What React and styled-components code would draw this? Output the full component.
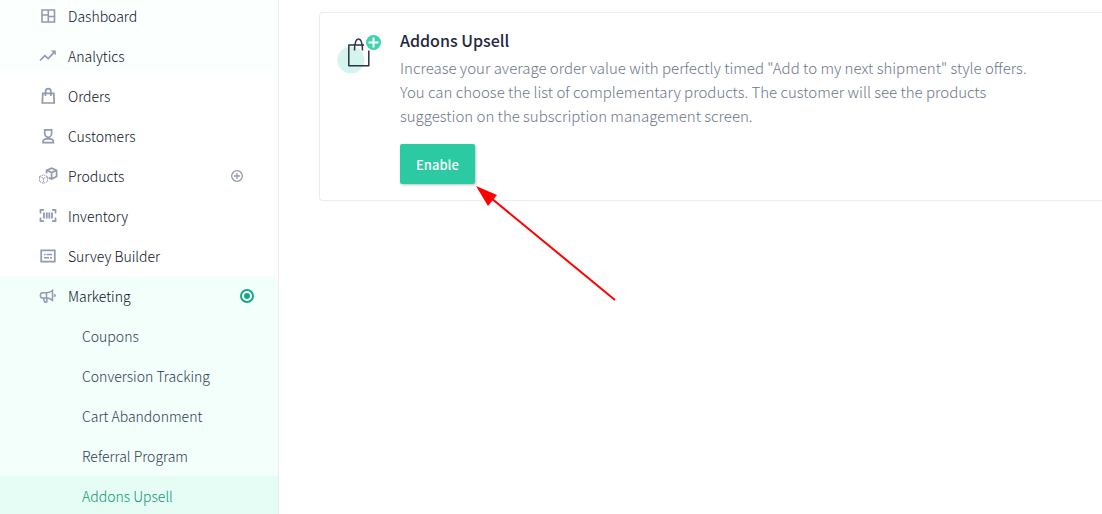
import React from 'react'
import styled, { createGlobalStyle } from 'styled-components';

const GlobalStyle = createGlobalStyle`
  * {
    box-sizing: border-box;
  }

  body {
    margin: 0;
    background: #fff;
    color: #0a1124;
    font-family: 'Noto Sans CJK SC', sans-serif;
    font-size: 14px;
  }
`

const Page = styled.div`
  display: flex;
  height: 100vh;
  overflow: hidden;
`

const Sidebar = styled.nav`
  flex: none;
  width: 279px;
  border-right: 1px solid #ececec;
  font-weight: 300;
`

/* the menu is scrolled down by a few pixels */
const Menu = styled.ul`
  margin: -4px 0 0;
  padding: 0;
  list-style: none;
`

const SubMenu = styled.ul`
  margin: 0;
  padding: 0;
  list-style: none;
`

const MenuItem = styled.li`
  background: ${({ $tone }) => ($tone === 'open' ? '#f2fffb' : $tone === 'hover' ? '#fbfffe' : 'transparent')};
`

const MenuRow = styled.div`
  display: flex;
  align-items: center;
  height: 40px;
  padding-right: ${({ $wide }) => ($wide ? '35px' : '24px')};
`

const MenuLink = styled.a`
  display: flex;
  flex: 1;
  align-items: center;
  gap: 10px;
  padding-left: 38px;
  line-height: 40px;
  color: #0a1124;
  text-decoration: none;
`

const SubLink = styled.a`
  display: block;
  padding-left: 82px;
  line-height: 40px;
  text-decoration: none;
  color: ${({ $active }) => ($active ? '#0c9372' : '#303a52')};
  background: ${({ $active }) => ($active ? '#e5fdf5' : 'transparent')};
`

const MenuIcon = styled.svg`
  flex: none;
  width: 20px;
  height: 20px;
  fill: none;
  stroke: #9299b0;
  stroke-width: 1.7;
`

const AddButton = styled.button`
  display: flex;
  padding: 0;
  border: none;
  background: none;
  cursor: pointer;
`

const Main = styled.main`
  flex: 1;
  min-width: 0;
  padding: 12px 0 0 40px;
`

const Card = styled.section`
  display: flex;
  align-items: flex-start;
  gap: 16px;
  padding: 16px;
  border: 1px solid #ececec;
  border-right: none;
  border-radius: 4px 0 0 4px;
`

const CardIcon = styled.svg`
  flex: none;
  width: 48px;
  height: 48px;
`

const CardBody = styled.div`
  max-width: 640px;
`

const CardTitle = styled.h2`
  margin: 0;
  font-size: 16px;
  font-weight: 500;
  line-height: 22px;
  color: #1e2740;
`

const CardText = styled.p`
  margin: 5px 0 16px;
  font-size: 15px;
  font-weight: 300;
  line-height: 24px;
  color: #6d778c;
`

const ButtonWrap = styled.div`
  position: relative;
  width: fit-content;
`

const EnableButton = styled.button`
  display: block;
  height: 40px;
  padding: 0 16px;
  border: none;
  border-radius: 2px;
  background: #2bcaa2;
  box-shadow: 1px 1px 3px rgba(0, 0, 0, 0.25);
  color: #fff;
  font-family: inherit;
  font-size: 13px;
  font-weight: 500;
  cursor: pointer;
`

const Arrow = styled.svg`
  position: absolute;
  top: 100%;
  left: 100%;
  width: 142px;
  height: 120px;
  pointer-events: none;
`

const icons = {
  dashboard: <path d="M4 4h12.500v12H4zM10.300 4v12M4 9h6.300M10.300 10.500h6.200" strokeWidth="1.600" />,
  analytics: (
    <>
      <path d="M2 14.500l4.800-4.900 3.400 3 6.300-6.600" />
      <path d="M13.500 4.800h4v4z" fill="#9299b0" strokeWidth="0.500" />
    </>
  ),
  orders: <path d="M4.800 7.300h11l.4 9.700H4.300zM7.500 10V6a2.700 3.300 0 0 1 5.400 0v4" />,
  customers: (
    <>
      <path d="M6.700 3.800h6.900v3.300c0 2.300-1.500 4.200-3.400 4.200S6.700 9.400 6.700 7.100z" />
      <path d="M5 16.700v-1.200c0-1.700 1.700-2.500 3.400-2.700h3.600c1.700.2 3.400 1 3.400 2.700v1.200z" />
    </>
  ),
  products: (
    <>
      <path d="M8.600 7.500V4.300l5-2.200 5 2.200v6.200l-5 2.600-3-1.400M8.600 4.300l5 2.300 5-2.300M13.600 6.600v6.500" />
      <path d="M1.500 10.500l4-1.600 4 1.600v5l-4 1.800-4-1.800zM1.500 10.500l4 1.800 4-1.800M5.500 12.300v5" strokeWidth="1" strokeDasharray="1.500 0.800" />
    </>
  ),
  inventory: (
    <>
      <path d="M6 3.800H2.500V7.500M2.500 11.500v3.700H6M14 3.800h3.500V7.500M17.500 11.500v3.700H14" />
      <path d="M6 6.500v6M8.800 6.500v6M11.300 6.500v6M14 6.500v6" strokeWidth="1.800" />
    </>
  ),
  survey: (
    <>
      <path d="M3.200 4.300h13.600v11.400H3.200z" />
      <path d="M6 8.500h1.500M8.500 8.500H14M6 11.800h5M12 11.800h2" strokeWidth="1.400" />
    </>
  ),
  marketing: (
    <>
      <path d="M8.500 6.800H5a2.300 2.300 0 0 0 0 5.300h3.500c2.400 0 4.300.8 6 2.300V4.500c-1.700 1.500-3.600 2.300-6 2.300zM8.500 6.800v5.300M5.500 12.100l1 4h2.300v-4" strokeWidth="1.500" />
      <path d="M16.300 8.200a1.300 1.300 0 0 1 0 2.600z" fill="#9299b0" strokeWidth="0.600" />
    </>
  ),
}

const items = [
  { id: 'dashboard', label: 'Dashboard', tone: 'hover' },
  { id: 'analytics', label: 'Analytics', tone: 'hover' },
  { id: 'orders', label: 'Orders' },
  { id: 'customers', label: 'Customers' },
  { id: 'products', label: 'Products', canAdd: true },
  { id: 'inventory', label: 'Inventory' },
  { id: 'survey', label: 'Survey Builder' },
  {
    id: 'marketing',
    label: 'Marketing',
    tone: 'open',
    children: ['Coupons', 'Conversion Tracking', 'Cart Abandonment', 'Referral Program', 'Addons Upsell'],
  },
]

const AddIcon = () => (
  <svg width="12" height="12" viewBox="0 0 12 12" fill="none" stroke="#9299b0" strokeWidth="1.3">
    <circle cx="6" cy="6" r="5.300" />
    <path d="M6 3v6M3 6h6" />
  </svg>
)

const OpenIcon = () => (
  <svg width="14" height="14" viewBox="0 0 14 14" fill="none">
    <circle cx="7" cy="7" r="6" stroke="#17a883" strokeWidth="2" />
    <circle cx="7" cy="7" r="3" fill="#17a883" />
  </svg>
)

const Item = ({ item: { id, label, tone, canAdd, children } }) => (
  <MenuItem $tone={tone}>
    <MenuRow $wide={canAdd}>
      <MenuLink href={`#${id}`}>
        <MenuIcon viewBox="0 0 20 20" aria-hidden="true">{icons[id]}</MenuIcon>
        {label}
      </MenuLink>
      {canAdd && <AddButton aria-label="Add product"><AddIcon /></AddButton>}
      {children && <OpenIcon />}
    </MenuRow>
    {children && (
      <SubMenu>
        {children.map(child => (
          <li key={child}>
            <SubLink href="#marketing" $active={child === 'Addons Upsell'}>{child}</SubLink>
          </li>
        ))}
      </SubMenu>
    )}
  </MenuItem>
)

const App = () => (
  <>
    <GlobalStyle />
    <Page>
      <Sidebar>
        <Menu>
          {items.map(item => <Item key={item.id} item={item} />)}
        </Menu>
      </Sidebar>
      <Main>
        <Card>
          <CardIcon viewBox="0 0 48 48" aria-hidden="true">
            <circle cx="15" cy="31" r="13.500" fill="#d5f5ec" />
            <path d="M28 16H12.800v20.700h20V21.500M18.500 21.500c0-3 .5-11.500 4-11.500s4 8.500 4 11.500" fill="none" stroke="#2a3349" strokeWidth="1.500" strokeLinejoin="round" />
            <circle cx="37.500" cy="13.500" r="7.500" fill="#3dd3ae" />
            <path d="M37.500 8.500v10M32.500 13.500h10" stroke="#fff" strokeWidth="2" />
          </CardIcon>
          <CardBody>
            <CardTitle>Addons Upsell</CardTitle>
            <CardText>
              Increase your average order value with perfectly timed "Add to my next shipment" style offers.
              You can choose the list of complementary products. The customer will see the products
              suggestion on the subscription management screen.
            </CardText>
            <ButtonWrap>
              <EnableButton>Enable</EnableButton>
              <Arrow viewBox="0 0 142 120" aria-hidden="true">
                <path d="M16 14L140 116" stroke="#f00" strokeWidth="2" />
                <path d="M1 2l21 9-9 11z" fill="#f00" />
              </Arrow>
            </ButtonWrap>
          </CardBody>
        </Card>
      </Main>
    </Page>
  </>
);

export default App;
